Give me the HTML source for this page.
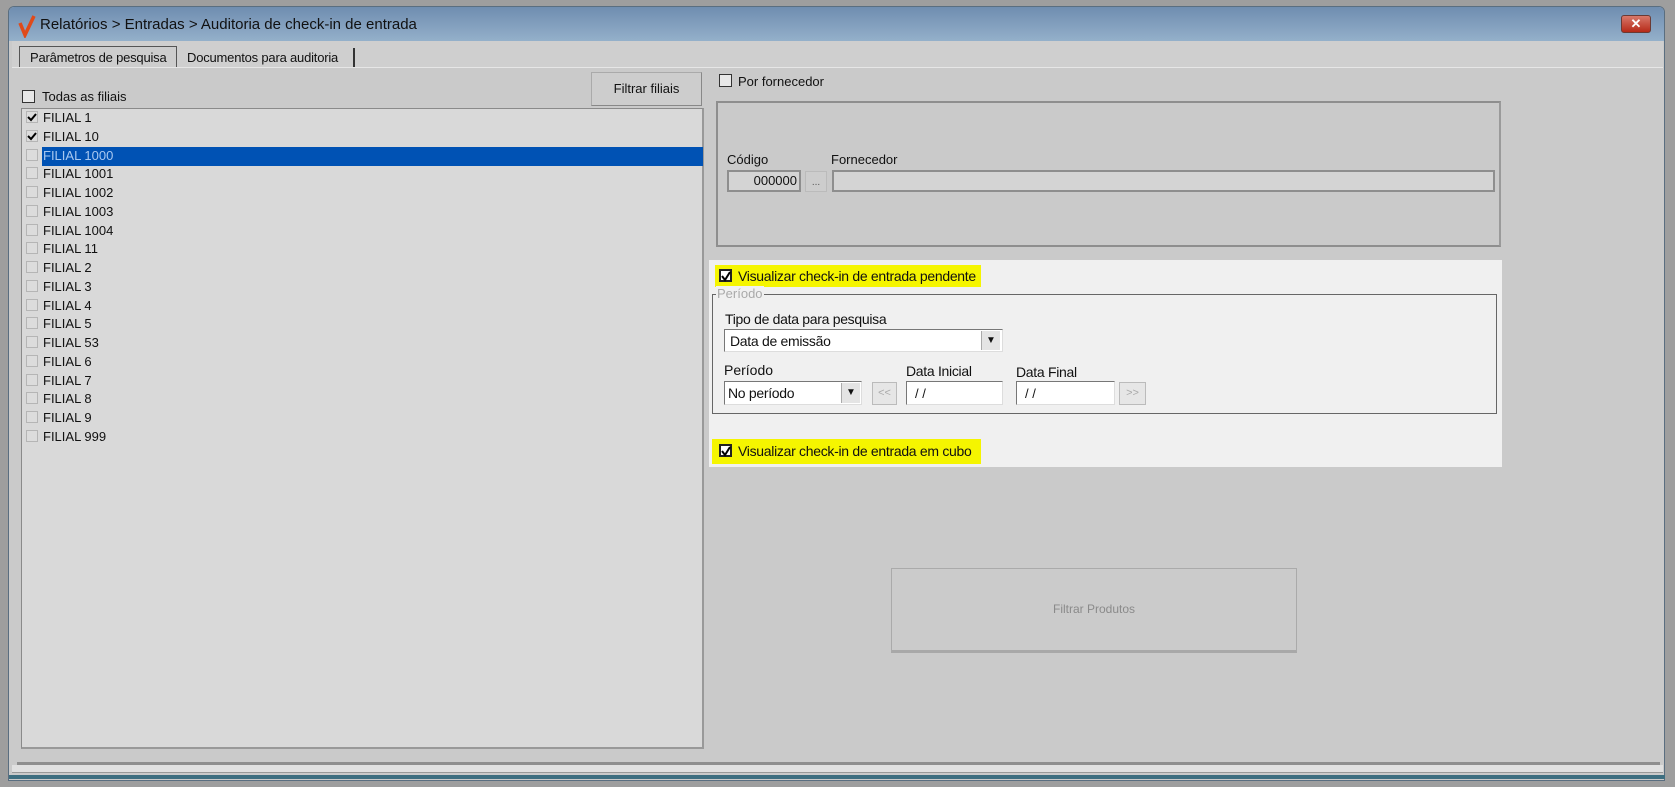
<!DOCTYPE html>
<html><head><meta charset="utf-8"><style>
*{box-sizing:border-box;margin:0;padding:0}
body{width:1675px;height:787px;background:#9e9e9e;font-family:"Liberation Sans",sans-serif;font-size:13px;color:#111;position:relative;overflow:hidden;letter-spacing:0}
.a{position:absolute}
.win{left:8px;top:6px;width:1657px;height:775px;background:#cacaca;border:1px solid #5a6e80;border-radius:6px 6px 0 0}
.title{left:9px;top:7px;width:1655px;height:34px;background:linear-gradient(#6f8db0,#94b0ca);border-radius:5px 5px 0 0}
.cb{width:13px;height:13px;border:1px solid #333;background:#e8e8e8}
.cbl{width:12px;height:12px;border:1px solid #b5b5b5;background:#dcdcdc}
.inp{background:#fff;border:1px solid #777;border-right-color:#ddd;border-bottom-color:#ddd}
.btn{background:#cdcdcd;border:1px solid #aaa;border-right-color:#888;border-bottom-color:#888}
.row{left:43px;height:19px;line-height:19px}
</style></head><body>
<div class="a win"></div>
<div class="a title"></div>
<svg class="a" style="left:18px;top:14px" width="18" height="24"><path d="M2 9 L7 21 L16 2" stroke="#e04a1a" stroke-width="3.5" fill="none"/></svg>
<div class="a" style="left:40px;top:16px;font-size:15px">Relatórios &gt; Entradas &gt; Auditoria de check-in de entrada</div>
<div class="a" style="left:1621px;top:15px;width:30px;height:18px;background:linear-gradient(#d8786a,#b62a18);border:1px solid #6b3a34;border-radius:3px;color:#fff;text-align:center;line-height:16px;font-weight:bold;font-size:13px">✕</div>
<div class="a" style="left:12px;top:41px;width:1651px;height:26px;background:#cfcfcf"></div>
<div class="a" style="left:19px;top:46px;width:158px;height:21px;border:1px solid #555;border-bottom:none;background:#cdcdcd;padding:3px 0 0 10px;letter-spacing:-0.2px">Parâmetros de pesquisa</div>
<div class="a" style="left:179px;top:48px;width:176px;height:19px;border-right:2px solid #333;padding:2px 0 0 8px;letter-spacing:-0.2px">Documentos para auditoria</div>
<div class="a" style="left:12px;top:67px;width:1651px;height:1px;background:#e6e6e6"></div>
<div class="a btn" style="left:591px;top:72px;width:111px;height:34px;text-align:center;line-height:32px">Filtrar filiais</div>
<div class="a cb" style="left:22px;top:90px"></div>
<div class="a" style="left:42px;top:89px">Todas as filiais</div>
<div class="a" style="left:21px;top:108px;width:683px;height:641px;background:#d9d9d9;border:1px solid #8a8a8a;border-bottom:2px solid #999;border-right:2px solid #999"></div>
<div class="a" style="left:42px;top:147px;width:661px;height:19px;background:#0052b4"></div>
<div id="rows"></div>
<div class="a cb" style="left:719px;top:74px"></div>
<div class="a" style="left:738px;top:74px">Por fornecedor</div>
<div class="a" style="left:716px;top:101px;width:785px;height:146px;border:2px solid #8e8e8e;border-right-color:#9a9a9a"></div>
<div class="a" style="left:727px;top:152px">Código</div>
<div class="a" style="left:831px;top:152px">Fornecedor</div>
<div class="a" style="left:727px;top:170px;width:74px;height:22px;background:#d4d4d4;border:2px solid #8e8e8e;text-align:right;padding-right:2px;line-height:18px">000000</div>
<div class="a" style="left:805px;top:171px;width:22px;height:21px;background:#cdcdcd;border:1px solid #bbb;text-align:center;font-size:10px;line-height:22px;color:#555">...</div>
<div class="a" style="left:832px;top:170px;width:663px;height:22px;background:#d4d4d4;border:2px solid #8e8e8e"></div>
<div class="a" style="left:709px;top:260px;width:793px;height:207px;background:#f0f0f0"></div>
<div class="a" style="left:715px;top:265px;width:266px;height:22px;background:#f5f500"></div>
<div class="a cb" style="left:719px;top:269px;border:2px solid #222;background:#fff"></div>
<svg class="a" style="left:720px;top:270px" width="12" height="12"><path d="M2 6 L5 10 L10 2" stroke="#000" stroke-width="2" fill="none"/></svg>
<div class="a" style="left:738px;top:268px;font-size:14px;letter-spacing:-0.3px">Visualizar check-in de entrada pendente</div>
<div class="a" style="left:712px;top:294px;width:785px;height:120px;border:1px solid #666"></div>
<div class="a" style="left:716px;top:286px;background:#f0f0f0;color:#aaa;padding:0 1px">Período</div>
<div class="a" style="left:725px;top:311px;font-size:14px;letter-spacing:-0.3px">Tipo de data para pesquisa</div>
<div class="a inp" style="left:724px;top:329px;width:279px;height:23px;padding:3px 0 0 5px;font-size:14px;letter-spacing:-0.3px">Data de emissão</div>
<div class="a" style="left:981px;top:331px;width:19px;height:19px;background:#e4e4e4;border-left:1px solid #aaa;font-size:10px;text-align:center;line-height:19px">▼</div>
<div class="a" style="left:724px;top:362px;font-size:14px">Período</div>
<div class="a" style="left:906px;top:363px;font-size:14px;letter-spacing:-0.3px">Data Inicial</div>
<div class="a" style="left:1016px;top:364px;font-size:14px;letter-spacing:-0.3px">Data Final</div>
<div class="a inp" style="left:724px;top:381px;width:138px;height:24px;padding:3px 0 0 3px;font-size:14px;letter-spacing:-0.3px">No período</div>
<div class="a" style="left:841px;top:383px;width:19px;height:20px;background:#e4e4e4;border-left:1px solid #aaa;font-size:10px;text-align:center;line-height:20px">▼</div>
<div class="a" style="left:872px;top:382px;width:25px;height:23px;background:#e6e6e6;border:1px solid #bbb;color:#aaa;text-align:center;line-height:20px;font-size:11px">&lt;&lt;</div>
<div class="a inp" style="left:906px;top:381px;width:97px;height:24px;padding:4px 0 0 8px">/ /</div>
<div class="a inp" style="left:1016px;top:381px;width:99px;height:24px;padding:4px 0 0 8px">/ /</div>
<div class="a" style="left:1119px;top:382px;width:27px;height:23px;background:#e6e6e6;border:1px solid #bbb;color:#aaa;text-align:center;line-height:20px;font-size:11px">&gt;&gt;</div>
<div class="a" style="left:712px;top:439px;width:269px;height:25px;background:#f5f500"></div>
<div class="a cb" style="left:719px;top:444px;border:2px solid #222;background:#fff"></div>
<svg class="a" style="left:720px;top:445px" width="12" height="12"><path d="M2 6 L5 10 L10 2" stroke="#000" stroke-width="2" fill="none"/></svg>
<div class="a" style="left:738px;top:443px;font-size:14px;letter-spacing:-0.3px">Visualizar check-in de entrada em cubo</div>
<div class="a" style="left:891px;top:568px;width:406px;height:85px;background:#cbcbcb;border:1px solid #aaa;border-bottom:3px solid #a8a8a8;text-align:center;line-height:80px;color:#8a8a8a;font-size:12px">Filtrar Produtos</div>
<div class="a" style="left:17px;top:762px;width:1643px;height:3px;background:#8e8e8e"></div>
<div class="a" style="left:12px;top:765px;width:1651px;height:8px;background:#e0e0e0;border-bottom:1px solid #999"></div>
<div class="a" style="left:9px;top:775px;width:1656px;height:4px;background:#3d6e80"></div>
<script>
var n=["1","10","1000","1001","1002","1003","1004","11","2","3","4","5","53","6","7","8","9","999"],h="";
for(var i=0;i<n.length;i++){var y=108+i*18.75;
h+='<div class="a cbl" style="left:26px;top:'+(y+3)+'px"></div>';
if(i<2)h+='<svg class="a" style="left:26px;top:'+(y+3)+'px" width="12" height="12"><path d="M2 6 L5 9 L10 3" stroke="#000" stroke-width="2" fill="none"/></svg>';
h+='<div class="a row" style="top:'+y+'px;'+(i==2?'color:#a8c8f0':'')+'">FILIAL '+n[i]+'</div>';}
document.getElementById("rows").innerHTML=h;
</script>
</body></html>
